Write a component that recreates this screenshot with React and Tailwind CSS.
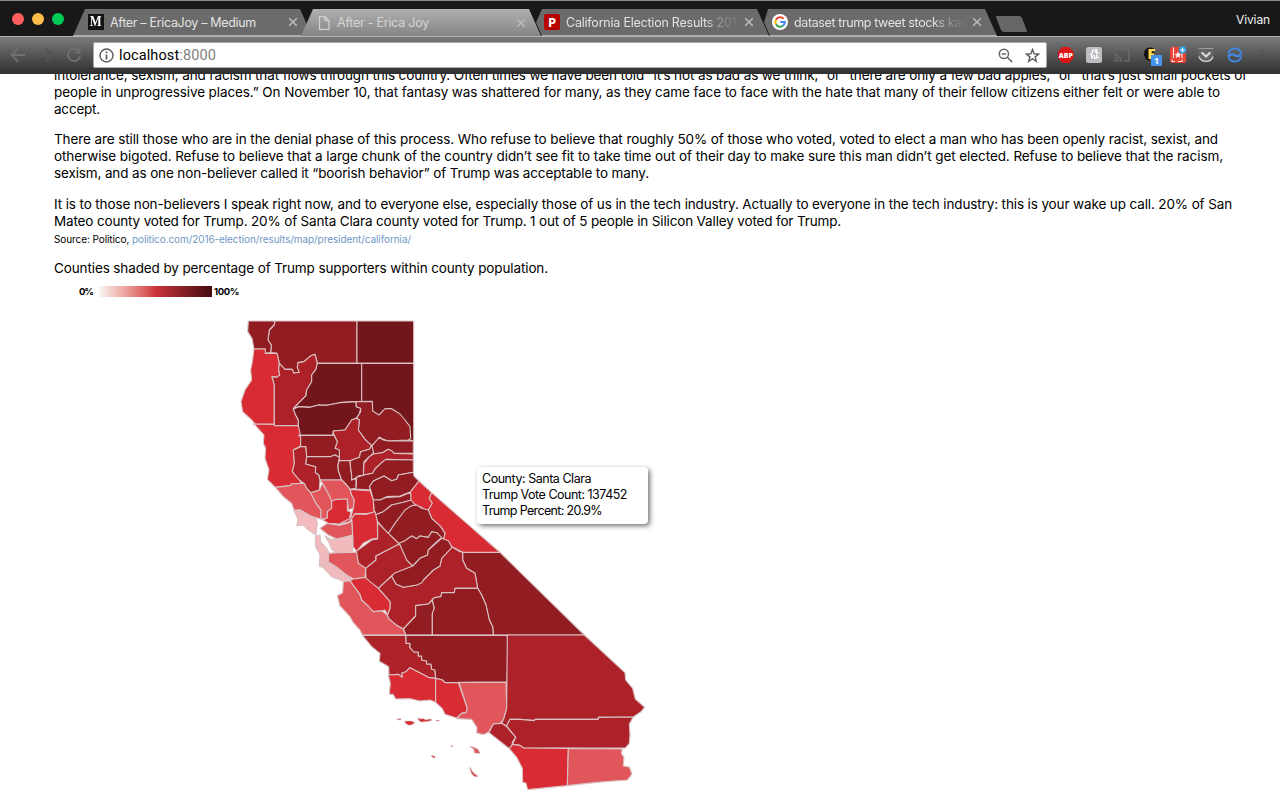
import React, { useLayoutEffect, useRef } from "react";

const C1 = "#73161c", C2 = "#911c22", C3 = "#ad2228", C4 = "#d92b33", C5 = "#e1565b", C6 = "#f2babd";

// County outlines, grouped by map section. Each section has its own origin; units are thirds of a pixel.
const SECTIONS = [
  { at: [230, 310], counties: [
    [C2, "135,33 381,33 381,160 262,160 255,133 243,137 222,155 204,158 202,172 208,187 192,190 186,178 165,178 148,160 141,130 122,128 124,105 114,90 118,60 132,45"],
    [C2, "55,33 135,33 132,45 118,60 114,90 124,105 122,128 106,130 106,117 72,117 66,85 53,65"],
    [C1, "381,33 551,33 551,160 381,160"],
    [C4, "72,117 106,117 106,130 141,130 148,160 146,178 149,195 140,202 126,200 133,225 133,343 76,343 65,330 38,305 33,275 45,240 65,210 62,180 67,155"],
    [C3, "148,160 165,178 186,178 192,190 208,187 202,172 204,158 222,155 243,137 255,133 262,160 258,178 245,195 245,215 230,240 228,257 205,280 190,295 197,315 205,330 205,348 133,348 133,225 126,200 140,202 149,195 146,178"],
    [C1, "262,160 395,160 395,274 330,278 290,286 265,285 240,292 205,290 190,298 205,280 228,257 230,240 245,215 245,195 258,178"],
    [C1, "395,160 551,160 551,392 535,390 427,330 395,274"],
    [C1, "190,298 205,290 240,292 265,285 290,286 330,278 378,275 379,290 392,295 388,312 378,325 365,330 345,360 310,363 308,376 205,376 205,348 205,330 197,315"],
    [C2, "378,275 427,274 428,303 447,315 465,296 485,296 510,312 525,330 540,350 542,385 535,390 500,392 475,393 460,388 448,382 440,395 425,407 405,388 385,360 388,330 380,325 392,305 392,295 379,290"],
    [C3, "378,325 388,330 385,360 405,388 425,407 418,418 392,425 388,442 360,452 328,452 326,420 315,415 322,395 310,370 310,363 345,360 365,330"],
  ]},
  { at: [240, 420], counties: [
    [C4, "38,12 103,13 103,17 175,17 182,50 182,78 160,90 163,130 157,155 178,180 184,190 155,192 150,197 106,202 82,178 87,150 75,115 77,85 70,70 72,45 45,15"],
    [C2, "175,46 282,46 292,65 285,85 298,90 298,112 285,105 270,110 200,110 197,80 182,80 182,50"],
    [C2, "200,110 270,110 285,105 298,112 294,135 295,152 305,180 240,180 236,165 226,158 227,140 215,137 197,132"],
    [C3, "160,90 182,80 197,80 200,110 197,132 215,137 227,140 226,158 236,165 240,180 238,210 212,218 200,205 192,190 178,180 157,155 163,130"],
    [C2, "298,122 330,122 332,145 335,165 335,180 348,175 348,205 330,208 320,195 305,180 295,152 294,135"],
    [C2, "330,122 358,112 362,95 388,88 395,77 400,85 400,100 388,110 372,125 370,155 372,165 355,168 345,175 335,180 335,165 332,145"],
    [C2, "396,77 418,52 430,60 445,63 520,62 520,100 462,100 445,88 430,97 402,104"],
    [C3, "400,102 430,97 445,88 455,92 462,100 520,102 520,120 438,118 425,128 405,147 398,160 370,165 372,130 388,110"],
    [C2, "438,118 520,120 520,157 475,165 470,178 455,182 432,168 400,183 390,200 390,210 348,207 350,172 372,165 398,160 405,147 425,128"],
    [C2, "400,183 432,168 455,182 470,178 475,165 520,157 522,168 537,183 512,215 480,228 440,230 420,240 400,240 392,210 388,200"],
    [C2, "400,240 420,240 440,232 480,230 512,217 515,240 490,247 455,255 430,275 405,285 402,270"],
    [C4, "537,183 575,218 568,235 578,250 565,270 565,285 545,262 530,257 513,247 512,215"],
    [C2, "405,285 430,275 455,255 490,247 513,240 528,257 515,262 500,275 470,320 446,341 430,325 412,303"],
    [C5, "106,202 150,197 155,192 184,190 192,190 200,205 212,218 228,250 243,270 243,298 212,288 180,270 162,270 155,250 130,230"],
    [C5, "212,218 238,210 248,190 262,215 275,235 275,265 262,275 262,295 243,298 243,270 228,250"],
    [C5, "240,180 305,180 320,195 330,208 335,225 343,240 340,265 325,270 322,237 275,243 262,215 248,190"],
    [C4, "330,208 390,212 400,240 402,278 380,281 345,281 328,305 300,312 333,290 340,265 343,240 335,225"],
    [C4, "275,243 290,238 322,237 322,272 333,275 328,297 310,305 300,312 265,310 248,300 262,293 262,275 275,265"],
    [C4, "335,295 345,282 380,283 405,275 412,303 413,355 395,357 370,370 350,394 339,380 338,345"],
    [C5, "240,325 262,310 300,316 328,308 335,300 338,345 318,350 290,357 265,345"],
    [C6, "162,272 180,270 212,288 228,295 232,310 228,345 205,330 190,315 170,318 174,298"],
  ]},
  { at: [300, 480], counties: [
    [C2, "488,217 600,217 853,465 580,465 578,440 568,420 558,375 545,345 533,325 525,280 500,265 488,240"],
    [C4, "395,38 600,217 488,217 458,202 430,178 435,160 422,140 395,115 385,90 397,70 388,55"],
    [C2, "335,77 350,75 365,85 385,90 395,115 422,140 435,160 430,178 420,172 410,158 395,155 385,172 360,168 350,176 335,168 315,182 297,192 265,160 285,130 315,90 330,80"],
    [C3, "168,215 215,180 233,177 233,128 265,160 298,192 228,228 228,240 197,265 175,250"],
    [C3, "197,265 228,240 228,228 298,192 338,258 275,288 235,325 198,298"],
    [C3, "235,325 275,288 288,312 310,322 350,315 370,300 400,270 420,258 425,235 455,200 480,215 488,217 488,240 500,265 525,280 533,325 465,325 463,338 425,338 423,350 400,355 385,372 347,377 347,408 310,447 290,436 265,415 262,405 270,385 270,365"],
    [C2, "298,190 315,182 335,168 350,176 360,168 385,172 395,155 410,158 425,172 405,190 385,210 383,225 360,235 338,258 320,240"],
    [C2, "275,288 283,280 338,258 360,235 383,225 385,210 425,175 445,182 456,202 425,235 420,258 400,270 390,280 370,300 366,308 350,315 310,322 288,312"],
    [C2, "347,377 385,372 397,360 403,385 397,400 397,465 317,465 310,447 347,408"],
    [C2, "397,360 403,353 423,350 425,338 463,338 465,325 533,325 545,345 558,375 568,420 578,440 580,465 397,465 397,400 403,385"],
    [C6, "75,167 92,178 110,178 158,168 158,217 110,220 95,208 88,190"],
    [C6, "46,168 60,165 62,185 80,205 88,220 83,240 88,255 75,262 58,258 60,225 47,200"],
    [C6, "58,258 75,256 90,250 115,265 140,285 155,300 130,304 95,290 72,265"],
    [C5, "86,220 110,218 158,217 170,217 175,250 197,265 195,292 160,297 140,285 115,265 85,245"],
    [C5, "130,305 150,302 180,343 185,360 205,378 220,395 245,392 262,405 265,415 290,436 310,447 317,465 187,465 180,450 160,428 150,410 120,378 112,347 128,338"],
    [C4, "150,302 160,297 195,292 235,325 270,365 270,385 262,405 255,390 245,392 220,395 205,378 185,360 180,343"],
  ]},
  { at: [350, 620], counties: [
    [C3, "37,46 168,46 168,70 180,70 180,83 192,96 205,96 205,108 215,108 215,120 230,123 230,132 243,132 245,148 255,150 257,175 235,172 180,143 168,155 155,160 157,172 145,163 117,165 116,140 88,124 90,100 65,80"],
    [C2, "168,46 470,46 475,60 471,186 327,188 285,188 277,180 257,175 255,150 245,148 243,132 230,132 230,123 215,120 215,108 205,108 205,96 192,96 180,83 180,70 168,70"],
    [C4, "115,165 145,163 157,172 155,160 168,155 180,143 235,172 257,175 257,247 240,240 210,243 180,236 137,237 130,224 118,222 121,190"],
    [C4, "257,175 277,180 285,188 325,188 352,265 348,278 335,280 320,294 285,283 277,266 257,247"],
    [C5, "327,187 468,187 470,265 460,300 450,310 430,312 417,335 405,342 395,343 380,338 381,323 365,298 320,296 335,280 348,278 352,265"],
    [C3, "472,45 703,45 825,158 827,180 848,205 856,237 884,262 872,276 850,291 745,292 745,298 555,298 553,302 510,298 480,298 470,318 455,310 462,295 470,265"],
    [C3, "470,318 480,298 510,298 553,302 555,298 745,298 745,292 850,291 838,312 840,345 838,370 826,384 520,384 510,376 488,373 497,352"],
    [C3, "417,338 430,312 455,310 470,320 497,352 488,365 485,378 478,386"],
    [C4, "478,386 488,373 510,376 520,384 655,385 652,497 533,509 528,490 518,487 517,445 500,412"],
    [C5, "655,385 817,387 814,400 822,412 820,438 838,441 846,462 832,480 740,487 652,497"],
  ]},
];

const ISLANDS = [
  [C5, "140,297 153,296 153,299 146,300"],
  [C4, "164,304 178,303 186,304 194,308 188,313 178,316 168,311"],
  [C4, "204,293 210,297 222,296 226,300 243,297 245,301 234,304 214,306 206,301"],
  [C5, "258,301 268,301 267,303 260,303"],
  [C4, "243,406 252,408 257,412 250,413"],
  [C5, "359,379 368,381 384,388 390,400 374,399 372,388"],
  [C5, "359,442 363,446 368,456 384,469 374,470 365,462"],
  [C5, "303,377 307,377 307,380 303,380"],
];

function CaliforniaMap() {
  return (
    <svg className="block h-[490px] w-[430px]" viewBox="230 310 430 490">
      {SECTIONS.map((s) => (
        <g key={s.at.join()} transform={`translate(${s.at[0]} ${s.at[1]}) scale(0.33333)`}>
          {s.counties.map(([fill, points], i) => (
            <polygon key={i} points={points} fill={fill} stroke="#d8c2c3" strokeWidth="3.3" strokeLinejoin="round" />
          ))}
        </g>
      ))}
      <g transform="translate(350 620) scale(0.33333)">
        {ISLANDS.map(([fill, points]) => (
          <polygon key={points} points={points} fill={fill} stroke="#c9a5a6" strokeWidth="1.6" />
        ))}
      </g>
    </svg>
  );
}

// A single line of copy whose tracking is computed so that it spans the given measure.
function Line({ w, className = "", children }) {
  const ref = useRef(null);
  useLayoutEffect(() => {
    const el = ref.current;
    el.style.letterSpacing = "0px";
    const natural = el.getBoundingClientRect().width;
    el.style.letterSpacing = `${(w - natural) / el.textContent.length}px`;
  }, [w]);
  return (
    <div className={`whitespace-nowrap ${className}`}>
      <span ref={ref}>{children}</span>
    </div>
  );
}

function CloseX() {
  return (
    <svg className="size-[10px] shrink-0" viewBox="0 0 10 10"><path d="M1.2 1.2l7.6 7.6M8.8 1.2L1.2 8.8" stroke="#bdbdbd" strokeWidth="1.5" /></svg>
  );
}

function Tab({ shape, icon, title, width, text, fade }) {
  return (
    <div className={`flex h-[27px] shrink-0 items-center ${shape}`}>
      {icon}
      <div className={`ml-[6px] mr-[4px] flex-1 overflow-hidden pt-px text-[12.5px] leading-[18px] ${text} ${fade ? "[mask-image:linear-gradient(to_right,black_80%,#0006_88%,transparent_100%)]" : ""}`}>
        <Line w={width}>{title}</Line>
      </div>
      <CloseX />
    </div>
  );
}

const INACTIVE = "bg-[#6b6b6b] border-b border-[#b0b0b0]";

function TabBar() {
  return (
    <div className="flex h-[36px] items-start border-t border-[#858985] bg-[#181818] pt-[8px] font-[Inter,sans-serif]">
      <div className="flex w-[73px] shrink-0 gap-2 pl-3 pt-[4px]">
        <i className="size-[12px] rounded-full bg-[#ff5f5c]" />
        <i className="size-[12px] rounded-full bg-[#ffbd4c]" />
        <i className="size-[12px] rounded-full bg-[#00ca56]" />
      </div>
      <Tab shape={`w-[239px] pl-[15px] pr-[14px] [clip-path:polygon(12px_0,227px_0,239px_100%,0_100%)] ${INACTIVE}`} width={146} title="After – EricaJoy – Medium" text="text-[#e2e2e2]"
        icon={<span className="flex size-4 items-center justify-center bg-[#111] font-['Liberation_Serif',serif] text-[14px] leading-none font-bold text-white"><span className="scale-x-90">M</span></span>} />
      <Tab shape="relative z-10 -ml-[11px] w-[240px] bg-linear-to-b from-[#b0b0b0] to-[#858585] pl-[17px] pr-[15px] [clip-path:polygon(12px_0,228px_0,240px_100%,0_100%)]" width={92} title="After - Erica Joy" text="text-[#d4d4d4] !ml-[5px]"
        icon={<svg className="-ml-px mr-px size-[14px]" viewBox="0 0 14 14"><path d="M2.500 .7H8l4 4v8.600H2.500zM8 .7v4h4" fill="none" stroke="#d0d0d0" strokeWidth="1.300" /></svg>} />
      <Tab shape={`-ml-[11px] w-[239px] pl-[14px] pr-[15px] [clip-path:polygon(12px_0,227px_0,239px_100%,12px_100%,6px_50%)] ${INACTIVE}`} width={178} title="California Election Results 2016" text="text-[#e2e2e2]" fade
        icon={<span className="flex size-4 items-center justify-center rounded-[2px] bg-[#b70000] font-['Open_Sans',sans-serif] text-[13px] leading-none font-bold text-white">P</span>} />
      <Tab shape={`-ml-[11px] w-[239px] pl-[14px] pr-[15px] [clip-path:polygon(10px_0,227px_0,239px_100%,12px_100%,6px_50%)] ${INACTIVE}`} width={191} title="dataset trump tweet stocks kaggle" text="text-[#e2e2e2]" fade
        icon={<svg className="size-4" viewBox="0 0 16 16"><circle cx="8" cy="8" r="8" fill="#fff" /><g fill="none" strokeWidth="2.1"><path d="M11.6 4.8A4.8 4.8 0 0 0 3.9 5.7" stroke="#ea4335" /><path d="M3.9 5.7a4.8 4.8 0 0 0 0 4.6" stroke="#fbbc05" /><path d="M3.9 10.3a4.8 4.8 0 0 0 7.3 1.2" stroke="#34a853" /><path d="M11.2 11.5A4.8 4.8 0 0 0 12.8 8H8.2" stroke="#4285f4" /></g></svg>} />
      <svg className="-ml-[2px] mt-[7px] h-[17px] w-[33px] shrink-0" viewBox="0 0 33 17"><path d="M2 0h22q2 0 3 2l5 13q.3 1-1 1H9q-2 0-3-2L1 1q0-1 1-1z" fill="#666" /></svg>
      <div className="flex-1 pl-[208px] pt-[2px] text-[12px] leading-[18px] text-[#f0f0f0]"><Line w={34}>Vivian</Line></div>
    </div>
  );
}

function Toolbar() {
  return (
    <div className="flex h-[38px] shrink-0 items-center border-t border-[#b0b0b0] bg-linear-to-b from-[#7b7b7b] to-[#303030] pb-px">
      <svg className="h-6 w-[93px] shrink-0" viewBox="0 0 93 24" fill="none" stroke="#707070" strokeWidth="1.8">
        <path d="M25 12H12M18 5.5L11.5 12l6.500 6.500" />
        <path d="M39 12h13M46 5.500l6.500 6.500-6.500 6.500" stroke="#565656" />
        <path d="M79.200 8.300A6.200 6.200 0 1 0 80.200 13" /><path d="M80.500 5v5.500H75z" fill="#707070" stroke="none" />
      </svg>
      <div className="flex h-[26px] w-[954px] shrink-0 items-center rounded-[2px] border border-[#ababab] bg-white pl-[5px] pr-[6px]">
        <svg className="size-[15px]" viewBox="0 0 15 15"><circle cx="7.500" cy="7.500" r="6.500" fill="none" stroke="#5a5a5a" strokeWidth="1.400" /><path d="M7.500 3.500v1.800M7.500 6.500v5" stroke="#5a5a5a" strokeWidth="1.700" /></svg>
        <div className="ml-[5px] flex-1 pt-[2px] font-[Roboto,sans-serif] text-[14.5px] leading-[20px] text-black"><Line w={97}>localhost<span className="text-[#808080]">:8000</span></Line></div>
        <svg className="mr-[12px] size-[15px]" viewBox="0 0 15 15" fill="none" stroke="#666" strokeWidth="1.500"><circle cx="5.900" cy="5.900" r="4.600" /><path d="M9.300 9.300l4.800 4.800M3.700 5.900h4.400" /></svg>
        <svg className="size-[15px]" viewBox="0 0 24 24" fill="none" stroke="#5d5d5d" strokeWidth="2.200"><path d="M12 2.300l2.600 6.900 7.400.4-5.800 4.600 2 7.100L12 17.200l-6.200 4.100 2-7.100L2 9.600l7.400-.4z" /></svg>
      </div>
      <svg className="ml-[10px] h-[22px] w-[218px] shrink-0" viewBox="0 0 218 22">
        <path d="M5.500 3h6.500l4.500 4.700v6.600L12 19H5.500L1 14.300V7.700z" fill="#dc1616" />
        <text x="8.800" y="13.600" textAnchor="middle" textLength="14" lengthAdjust="spacingAndGlyphs" fontFamily="Open Sans" fontWeight="800" fontSize="7.500" fill="#fff">ABP</text>
        <rect x="29" y="3" width="16" height="16" rx="2.500" fill="#bdbec1" />
        <path d="M33 11q3.200-1.500 3-5-1.800 3-1.300 8.500 1.200-3.500 2.300-3 .7.800.3 3 1.200.3 2.200-1.500.8-5 0-7.500-1.300-.6-1.700 1.500 1 2.300 4 1.300M40 8.500l-.2 5.500q1 .5 1.900-1" stroke="#fff" strokeWidth="1.100" fill="none" />
        <g stroke="#696969" strokeWidth="1.400" fill="none"><path d="M58 8V5h14v12h-5M57 16a2 2 0 0 1 2 2M57 13.300a4.600 4.600 0 0 1 4.600 4.600M57 10.500a7.400 7.400 0 0 1 7.400 7.400" /></g>
        <path d="M89.500 4.500q-2.500 2-2 4-1.500 3 .8 4.500-.5 2 2 3 2 1.500 3-1l4-3.500V5q-4-2.500-7.800-.5z" fill="#111" />
        <path d="M91.500 5H98v2.300h-3.300v2h2.500v1.900h-2.500V15H91.500z" fill="#ffd94e" />
        <rect x="94" y="11" width="11" height="11" rx="1" fill="#4695ed" />
        <text x="99.500" y="19.800" textAnchor="middle" fontFamily="Open Sans" fontWeight="700" fontSize="9" fill="#fff">1</text>
        <rect x="113" y="3" width="16" height="16" rx="2" fill="#e94235" />
        <path d="M116.500 3.500v10.500M115 15.500v2h3m3 0h4v-2M125 10v4" stroke="#f8dfdc" strokeWidth="1.200" fill="none" />
        <path d="M121 7.500l1 2.300 2.500.2-2 1.600.6 2.400-2.100-1.400-2.100 1.400.6-2.400-2-1.600 2.500-.2z" fill="#fff" />
        <circle cx="125.500" cy="6" r="3.700" fill="#2b9fdc" /><path d="M125.500 3.800v4.400M123.300 6h4.400" stroke="#fff" strokeWidth="1.200" />
        <path d="M141.200 4.500h15.600v6a7.800 7.800 0 0 1-15.600 0z" fill="#646464" /><path d="M141.500 4.500h15" stroke="#999" strokeWidth="1" />
        <path d="M142 12.500a7.300 6.800 0 0 0 14 0" fill="none" stroke="#d2d2d2" strokeWidth="1.300" />
        <path d="M145.300 9l3.700 3.500L152.700 9" fill="none" stroke="#d8d8d8" strokeWidth="2.300" strokeLinecap="round" strokeLinejoin="round" />
        <g fill="none" stroke="#4285dd" strokeWidth="1.900"><path d="M171.300 9.500a6.700 6.700 0 0 1 12.800-.6M184.300 12.500a6.700 6.700 0 0 1-12.800.6" /><path d="M170.800 12.700q3.500-3.900 7-1.500t7-1.700" strokeWidth="2.300" /></g>
        <g fill="#555"><circle cx="205" cy="6.500" r="1.300" /><circle cx="205" cy="11" r="1.300" /><circle cx="205" cy="15.500" r="1.300" /></g>
      </svg>
    </div>
  );
}

export default function App() {
  return (
    <div className="flex h-[800px] w-[1280px] flex-col overflow-hidden bg-white text-black">
      <TabBar />
      <Toolbar />
      <main className="relative min-h-0 flex-1 overflow-hidden pl-[54px] font-[Inter,sans-serif]">
        <div className="-mt-[7px] text-[13.5px] leading-[17px]">
          <div>
            <Line w={1193}>intolerance, sexism, and racism that flows through this country. Often times we have been told “it’s not as bad as we think,” or “there are only a few bad apples,” or “that’s just small pockets of</Line>
            <Line w={1166}>people in unprogressive places.” On November 10, that fantasy was shattered for many, as they came face to face with the hate that many of their fellow citizens either felt or were able to</Line>
            <Line w={46}>accept.</Line>
          </div>
          <div className="mt-[13px]">
            <Line w={1164}>There are still those who are in the denial phase of this process. Who refuse to believe that roughly 50% of those who voted, voted to elect a man who has been openly racist, sexist, and</Line>
            <Line w={1169}>otherwise bigoted. Refuse to believe that a large chunk of the country didn’t see fit to take time out of their day to make sure this man didn’t get elected. Refuse to believe that the racism,</Line>
            <Line w={595}>sexism, and as one non-believer called it “boorish behavior” of Trump was acceptable to many.</Line>
          </div>
          <div className="mt-[14px]">
            <Line w={1178}>It is to those non-believers I speak right now, and to everyone else, especially those of us in the tech industry. Actually to everyone in the tech industry: this is your wake up call. 20% of San</Line>
            <Line w={787}>Mateo county voted for Trump. 20% of Santa Clara county voted for Trump. 1 out of 5 people in Silicon Valley voted for Trump.</Line>
            <Line w={357} className="text-[10px] leading-[19px]">Source: Politico, <span className="text-[#6f98c4]">politico.com/2016-election/results/map/president/california/</span></Line>
          </div>
          <div className="mt-[11px]"><Line w={494}>Counties shaded by percentage of Trump supporters within county population.</Line></div>
          <div className="mt-[8px] flex h-[13px] items-center pl-[25px] text-[9.5px] font-bold">
            <Line w={14}>0%</Line>
            <div className="ml-[6px] mr-[2px] h-[11px] w-[113px] bg-linear-to-r from-[#f8f6f6] via-[#cd333b] to-[#460d10]" />
            <Line w={25}>100%</Line>
          </div>
          <div className="ml-[176px] mt-[12px]"><CaliforniaMap /></div>
        </div>
        <div className="absolute left-[477px] top-[393px] h-[57px] w-[171px] rounded-[4px] bg-white pl-[5px] pt-[4px] text-[12.5px] leading-[16px] shadow-[2px_2px_5px_rgba(0,0,0,0.55)]">
          <Line w={109}>County: Santa Clara</Line>
          <Line w={145}>Trump Vote Count: 137452</Line>
          <Line w={120}>Trump Percent: 20.9%</Line>
        </div>
      </main>
    </div>
  );
}
